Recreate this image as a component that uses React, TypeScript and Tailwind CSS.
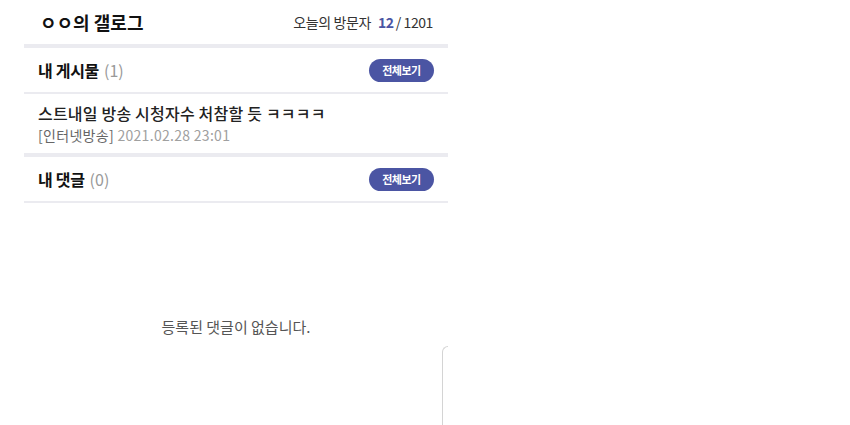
const font = { fontFamily: '"Noto Sans CJK KR", "Noto Sans", sans-serif' };

function SectionHead({ title, count }: { title: string; count: number }) {
  return (
    <div className="flex h-[44px] items-center justify-between pl-[14px] pr-[14px]">
      <div className="flex items-baseline gap-[5px]">
        <span className="text-[16px] font-bold tracking-[-0.3px] text-[#111]">{title}</span>
        <span className="text-[16px] text-[#999]">({count})</span>
      </div>
      <button className="flex h-[23px] w-[65px] items-center justify-center rounded-full bg-[#4b55a3] text-[11px] font-bold tracking-[-0.5px] text-white">
        전체보기
      </button>
    </div>
  );
}

export default function App() {
  return (
    <div className="h-[425px] w-[850px] bg-white" style={font}>
      <div className="ml-[24px] w-[424px]">
        <div className="flex h-[44px] items-center justify-between pl-[16px] pr-[15px]">
          <h1 className="text-[18px] font-bold text-[#111]">ㅇㅇ의 갤로그</h1>
          <div className="flex items-baseline text-[14px] tracking-[-0.4px] text-[#333]">
            <span>오늘의 방문자</span>
            <span className="ml-[7px] font-bold text-[#4b55a3]">12</span>
            <span className="ml-[2px]">/ 1201</span>
          </div>
        </div>
        <div className="h-[4px] bg-[#ebebf0]" />

        <SectionHead title="내 게시물" count={1} />
        <div className="h-[2px] bg-[#ebebf0]" />

        <div className="flex h-[59px] flex-col justify-center pl-[14px]">
          <div className="text-[16px] font-medium leading-[21px] tracking-[0.2px] text-[#222]">
            스트내일 방송 시청자수 처참할 듯 ㅋㅋㅋㅋ
          </div>
          <div className="mt-[2px] text-[14px] leading-[19px] tracking-[0.3px] text-[#a0a0a0]">
            <span className="text-[#666]">[인터넷방송]</span> 2021.02.28 23:01
          </div>
        </div>
        <div className="h-[4px] bg-[#ebebf0]" />

        <SectionHead title="내 댓글" count={0} />
        <div className="h-[2px] bg-[#ebebf0]" />

        <div className="flex h-[135px] items-end justify-center">
          <p className="text-[15px] text-[#555]">등록된 댓글이 없습니다.</p>
        </div>
        <div className="mt-[8px] flex justify-end">
          <div className="h-[80px] w-[6px] rounded-tl-[6px] border-l-[1.5px] border-t-[1.5px] border-[#d4d4d4]" />
        </div>
      </div>
    </div>
  );
}
